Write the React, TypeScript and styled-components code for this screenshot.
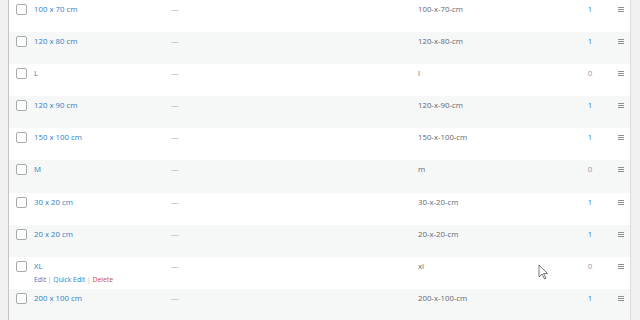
import React from "react";
import styled, { createGlobalStyle } from "styled-components";

const Global = createGlobalStyle`
  html, body { margin: 0; padding: 0; background: #f0f0f1; }
  body { font-family: "Open Sans", "Noto Sans", sans-serif; overflow: hidden; }
`;

const Page = styled.div`
  position: relative;
  width: 640px;
  height: 320px;
  overflow: hidden;
  padding-left: 8px;
  padding-right: 9px;
  box-sizing: border-box;
`;

const Table = styled.div`
  margin-top: -0.5px;
  border-left: 1px solid #c3c4c7;
  border-right: 1px solid #dcdcde;
  background: #fff;
`;

const Row = styled.div<{ $alt: boolean }>`
  display: grid;
  grid-template-columns: 25px 137px 247px 160px 24px 1fr;
  height: 32.2px;
  background: ${(p) => (p.$alt ? "#f6f7f7" : "#fff")};
  font-size: 7.8px;
  line-height: 12px;
  color: #646970;
`;

const Cell = styled.div`
  padding-top: 3px;
`;

const CheckCell = styled.div`
  padding: 4px 0 0 7px;
`;

const Checkbox = styled.span`
  display: block;
  width: 9px;
  height: 9px;
  border: 1px solid #a7aaad;
  border-radius: 2px;
  background: #fff;
`;

const NameLink = styled.a`
  color: #3080c2;
  text-decoration: none;
`;

const Actions = styled.div`
  font-size: 6.8px;
  line-height: 10px;
  color: #a7aaad;
  margin-top: 3px;
`;

const ActionLink = styled.a<{ $danger?: boolean }>`
  color: ${(p) => (p.$danger ? "#c0504f" : "#3080c2")};
  text-decoration: none;
`;

const Dash = styled.span`
  color: #a7aaad;
`;

const CountCell = styled(Cell)<{ $zero: boolean }>`
  text-align: center;
  color: ${(p) => (p.$zero ? "#8c9cb0" : "#3080c2")};
`;

const HandleCell = styled.div`
  padding: 7px 0 0 16px;
`;

const Handle = styled.span`
  display: flex;
  flex-direction: column;
  gap: 1px;
  width: 6px;
  span {
    display: block;
    height: 1px;
    background: #8c8f94;
  }
`;

const Cursor = styled.svg`
  position: absolute;
  left: 538px;
  top: 264px;
`;

const terms = [
  { name: "100 x 70 cm", slug: "100-x-70-cm", count: 1 },
  { name: "120 x 80 cm", slug: "120-x-80-cm", count: 1 },
  { name: "L", slug: "l", count: 0 },
  { name: "120 x 90 cm", slug: "120-x-90-cm", count: 1 },
  { name: "150 x 100 cm", slug: "150-x-100-cm", count: 1 },
  { name: "M", slug: "m", count: 0 },
  { name: "30 x 20 cm", slug: "30-x-20-cm", count: 1 },
  { name: "20 x 20 cm", slug: "20-x-20-cm", count: 1 },
  { name: "XL", slug: "xl", count: 0, actions: true },
  { name: "200 x 100 cm", slug: "200-x-100-cm", count: 1 },
];

export default function App() {
  return (
    <>
      <Global />
      <Page>
        <Table>
          {terms.map((t, i) => (
            <Row key={t.slug} $alt={i % 2 === 1}>
              <CheckCell>
                <Checkbox />
              </CheckCell>
              <Cell>
                <NameLink href="#">{t.name}</NameLink>
                {t.actions && (
                  <Actions>
                    <ActionLink href="#">Edit</ActionLink> | <ActionLink href="#">Quick Edit</ActionLink> |{" "}
                    <ActionLink href="#" $danger>
                      Delete
                    </ActionLink>
                  </Actions>
                )}
              </Cell>
              <Cell>
                <Dash>—</Dash>
              </Cell>
              <Cell>{t.slug}</Cell>
              <CountCell $zero={t.count === 0}>{t.count}</CountCell>
              <HandleCell>
                <Handle>
                  <span />
                  <span />
                  <span />
                </Handle>
              </HandleCell>
            </Row>
          ))}
        </Table>
        <Cursor width="12" height="18" viewBox="0 0 12 18">
          <path d="M1 1 L1 13 L4 10 L6.5 15 L8 14.3 L5.6 9.5 L9.5 9.5 Z" fill="#fff" stroke="#555" strokeWidth="0.8" strokeLinejoin="round" />
        </Cursor>
      </Page>
    </>
  );
}
